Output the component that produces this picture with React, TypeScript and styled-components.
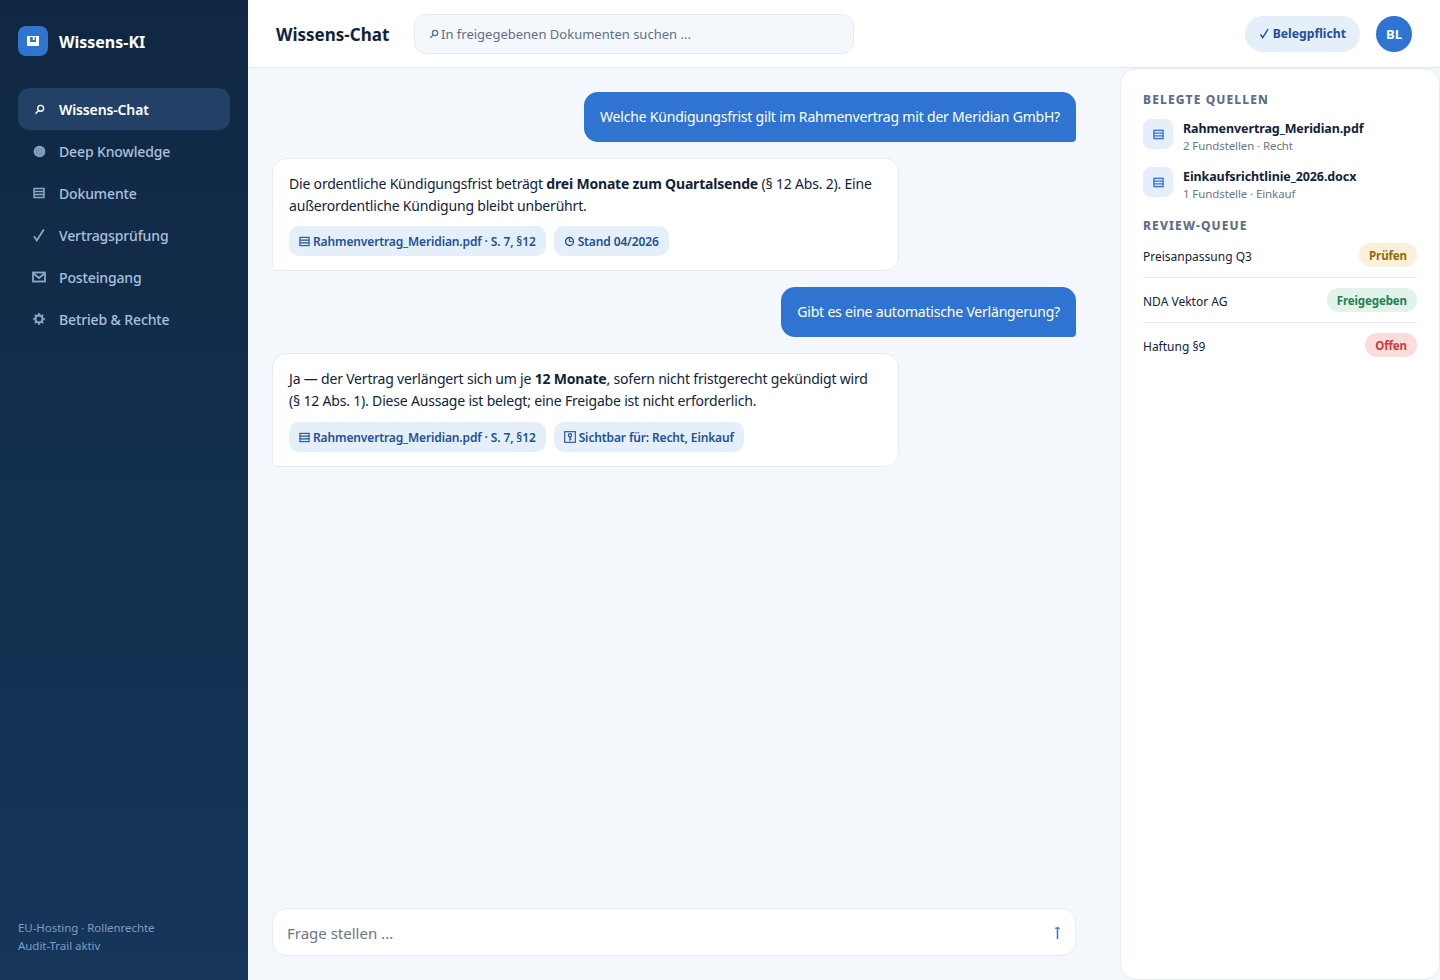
import React from "react";
import styled, { createGlobalStyle } from "styled-components";

const GlobalStyle = createGlobalStyle`
  * { box-sizing: border-box; }
  html, body { margin: 0; padding: 0; height: 100%; }
  body {
    font-family: "Noto Sans", "DejaVu Sans", sans-serif;
    background: #f4f8fd;
    color: #10233c;
  }
`;

const SearchIcon = ({ size = 12 }: { size?: number }) => (
  <svg width={size} height={size} viewBox="0 0 12 12" fill="none" stroke="currentColor">
    <circle cx="7.3" cy="4.7" r="3.2" strokeWidth="1.5" />
    <path d="M5 7.2 1.6 10.6" strokeWidth="1.6" />
  </svg>
);

const DotIcon = () => (
  <svg width="13" height="13" viewBox="0 0 13 13">
    <circle cx="6.5" cy="6.5" r="5.8" fill="#8ea6c7" />
    <circle cx="6.5" cy="6.5" r="4.6" fill="#7e95b8" />
  </svg>
);

const ListIcon = ({ size = 12, weight = 1.2 }: { size?: number; weight?: number }) => (
  <svg width={size} height={size} viewBox="0 0 12 12" fill="none" stroke="currentColor">
    <rect x="1" y="1.5" width="10" height="9" strokeWidth={weight} />
    <path d="M1 4.5h10M1 7.5h10" strokeWidth={weight} />
  </svg>
);

const CheckIcon = ({ size = 14 }: { size?: number }) => (
  <svg width={size} height={size} viewBox="0 0 14 14" fill="none" stroke="currentColor">
    <path d="M2 8.2 4.8 12.4 11.8 1.4" strokeWidth="1.8" />
  </svg>
);

const MailIcon = () => (
  <svg width="14" height="12" viewBox="0 0 14 12" fill="none" stroke="currentColor">
    <rect x="1" y="1.5" width="12" height="9" strokeWidth="1.8" />
    <path d="M1.5 2.5 7 7l5.5-4.5" strokeWidth="1.8" />
  </svg>
);

const GearIcon = () => (
  <svg width="14" height="14" viewBox="0 0 14 14" fill="none" stroke="currentColor">
    <circle cx="7" cy="7" r="3.6" strokeWidth="2.2" />
    <path
      d="M7 1v2M7 11v2M1 7h2M11 7h2M2.8 2.8l1.4 1.4M9.8 9.8l1.4 1.4M2.8 11.2l1.4-1.4M9.8 4.2l1.4-1.4"
      strokeWidth="1.6"
    />
  </svg>
);

const ClockIcon = () => (
  <svg width="11" height="11" viewBox="0 0 11 11" fill="none" stroke="currentColor">
    <circle cx="5.5" cy="5.5" r="4" strokeWidth="1.3" />
    <path d="M5.5 2.5v3h3" strokeWidth="1.2" />
  </svg>
);

const KeyBoxIcon = () => (
  <svg width="12" height="12" viewBox="0 0 12 12" fill="none" stroke="currentColor">
    <rect x="0.7" y="0.7" width="10.6" height="10.6" strokeWidth="1.1" />
    <circle cx="6" cy="4.2" r="1.6" strokeWidth="1.2" />
    <path d="M6 5.8v4M6 8h1.6" strokeWidth="1.2" />
  </svg>
);

const navItems = [
  { icon: <SearchIcon size={11} />, label: "Wissens-Chat", active: true },
  { icon: <DotIcon />, label: "Deep Knowledge" },
  { icon: <ListIcon weight={1.5} />, label: "Dokumente" },
  { icon: <CheckIcon />, label: "Vertragsprüfung" },
  { icon: <MailIcon />, label: "Posteingang" },
  { icon: <GearIcon />, label: "Betrieb & Rechte" },
];

const sources = [
  { name: "Rahmenvertrag_Meridian.pdf", meta: "2 Fundstellen · Recht" },
  { name: "Einkaufsrichtlinie_2026.docx", meta: "1 Fundstelle · Einkauf" },
];

const queue = [
  { name: "Preisanpassung Q3", status: "Prüfen", tone: "warn" },
  { name: "NDA Vektor AG", status: "Freigegeben", tone: "ok" },
  { name: "Haftung §9", status: "Offen", tone: "bad" },
] as const;

const App = () => {
  return (
    <>
      <GlobalStyle />
      <_Layout>
        <_Sidebar>
          <_Brand>
            <_Logo>
              <svg width="12" height="10" viewBox="0 0 12 10">
                <path
                  fill="#fff"
                  fillRule="evenodd"
                  d="M0 0h12v10H0zM3 1v5h6V1H7.6v3H5.8V1z"
                />
              </svg>
            </_Logo>
            <_BrandName>Wissens-KI</_BrandName>
          </_Brand>
          <_Nav>
            {navItems.map((item) => (
              <_NavItem key={item.label} $active={item.active}>
                <_NavIcon>{item.icon}</_NavIcon>
                {item.label}
              </_NavItem>
            ))}
          </_Nav>
          <_SideFooter>
            EU-Hosting · Rollenrechte
            <br />
            Audit-Trail aktiv
          </_SideFooter>
        </_Sidebar>

        <_Main>
          <_Topbar>
            <_Title>Wissens-Chat</_Title>
            <_Search>
              <SearchIcon size={10} />
              In freigegebenen Dokumenten suchen ...
            </_Search>
            <_TopRight>
              <_Duty>
                <CheckIcon size={11} />
                Belegpflicht
              </_Duty>
              <_Avatar>BL</_Avatar>
            </_TopRight>
          </_Topbar>

          <_Body>
            <_Chat>
              <_Messages>
                <_UserBubble>
                  Welche Kündigungsfrist gilt im Rahmenvertrag mit der Meridian GmbH?
                </_UserBubble>
                <_AnswerCard>
                  <_AnswerText>
                    Die ordentliche Kündigungsfrist beträgt{" "}
                    <strong>drei Monate zum Quartalsende</strong> (§{"\u00a0"}12 Abs. 2). Eine
                    außerordentliche Kündigung bleibt unberührt.
                  </_AnswerText>
                  <_Chips>
                    <_Chip>
                      <ListIcon size={11} />
                      Rahmenvertrag_Meridian.pdf · S. 7, §12
                    </_Chip>
                    <_Chip>
                      <ClockIcon />
                      Stand 04/2026
                    </_Chip>
                  </_Chips>
                </_AnswerCard>
                <_UserBubble>Gibt es eine automatische Verlängerung?</_UserBubble>
                <_AnswerCard>
                  <_AnswerText>
                    Ja — der Vertrag verlängert sich um je <strong>12 Monate</strong>,
                    sofern nicht fristgerecht gekündigt wird (§{"\u00a0"}12 Abs. 1). Diese Aussage
                    ist belegt; eine Freigabe ist nicht erforderlich.
                  </_AnswerText>
                  <_Chips $spaced>
                    <_Chip>
                      <ListIcon size={11} />
                      Rahmenvertrag_Meridian.pdf · S. 7, §12
                    </_Chip>
                    <_Chip>
                      <KeyBoxIcon />
                      Sichtbar für: Recht, Einkauf
                    </_Chip>
                  </_Chips>
                </_AnswerCard>
              </_Messages>
              <_Composer>
                <_ComposerInput placeholder="Frage stellen ..." />
                <_Send>
                  <svg width="7" height="13" viewBox="0 0 7 13" fill="none" stroke="currentColor">
                    <path d="M3.5 1v12" strokeWidth="1.5" />
                    <path d="M1 2.2h5" strokeWidth="1" />
                  </svg>
                </_Send>
              </_Composer>
            </_Chat>

            <_Panel>
              <_PanelTitle>Belegte Quellen</_PanelTitle>
              <_SourceList>
                {sources.map((s) => (
                  <_Source key={s.name}>
                    <_SourceIcon>
                      <ListIcon size={11} weight={1.5} />
                    </_SourceIcon>
                    <div>
                      <_SourceName>{s.name}</_SourceName>
                      <_SourceMeta>{s.meta}</_SourceMeta>
                    </div>
                  </_Source>
                ))}
              </_SourceList>
              <_PanelTitle>Review-Queue</_PanelTitle>
              <_Queue>
                {queue.map((q) => (
                  <_QueueRow key={q.name}>
                    <_QueueName>{q.name}</_QueueName>
                    <_Pill $tone={q.tone}>{q.status}</_Pill>
                  </_QueueRow>
                ))}
              </_Queue>
            </_Panel>
          </_Body>
        </_Main>
      </_Layout>
    </>
  );
};

export default App;

const _Layout = styled.div`
  display: flex;
  height: 980px;
  overflow: hidden;
`;

const _Sidebar = styled.aside`
  width: 248px;
  flex-shrink: 0;
  padding: 26px 18px 25px;
  display: flex;
  flex-direction: column;
  background: linear-gradient(180deg, #0f2742 0%, #16365a 100%);
`;

const _Brand = styled.div`
  display: flex;
  align-items: center;
  gap: 11px;
  height: 30px;
  margin-bottom: 32px;
`;

const _Logo = styled.div`
  width: 30px;
  height: 30px;
  border-radius: 8px;
  background: #2f74d0;
  display: flex;
  align-items: center;
  justify-content: center;
`;

const _BrandName = styled.div`
  padding-top: 2px;
  font-size: 16px;
  font-weight: 700;
  color: #ffffff;
`;

const _Nav = styled.nav`
  display: flex;
  flex-direction: column;
`;

const _NavItem = styled.div<{ $active?: boolean }>`
  height: 42px;
  padding: 0 14px;
  border-radius: 12px;
  display: flex;
  align-items: center;
  gap: 13px;
  font-size: 14px;
  letter-spacing: -0.13px;
  font-weight: ${({ $active }) => ($active ? 600 : 500)};
  color: ${({ $active }) => ($active ? "#ffffff" : "#a9c0de")};
  background: ${({ $active }) => ($active ? "#234166" : "transparent")};
`;

const _NavIcon = styled.span`
  width: 14px;
  display: flex;
  align-items: center;
  justify-content: center;
  color: #8ea6c7;
  ${_NavItem}:first-child & {
    color: #ffffff;
  }
`;

const _SideFooter = styled.div`
  margin-top: auto;
  font-size: 11.5px;
  line-height: 18px;
  letter-spacing: -0.05px;
  color: #7f9cc2;
`;

const _Main = styled.main`
  flex: 1;
  min-width: 0;
  display: flex;
  flex-direction: column;
`;

const _Topbar = styled.header`
  height: 68px;
  flex-shrink: 0;
  padding: 0 28px;
  display: flex;
  align-items: center;
  gap: 24px;
  background: #ffffff;
  border-bottom: 1px solid #e3ebf5;
`;

const _Title = styled.div`
  width: 114px;
  padding-top: 1px;
  font-size: 17px;
  font-weight: 700;
  white-space: nowrap;
  color: #10233c;
`;

const _Search = styled.div`
  width: 440px;
  height: 40px;
  padding: 0 14px;
  display: flex;
  align-items: center;
  gap: 2px;
  border-radius: 12px;
  border: 1px solid #e3ebf5;
  background: #f4f8fd;
  font-size: 13px;
  color: #5f6f85;
`;

const _TopRight = styled.div`
  margin-left: auto;
  display: flex;
  align-items: center;
  gap: 16px;
`;

const _Duty = styled.div`
  width: 115px;
  height: 36px;
  padding: 0 14px;
  border-radius: 18px;
  display: flex;
  align-items: center;
  gap: 3px;
  background: #e5eff9;
  font-size: 12.2px;
  font-weight: 700;
  white-space: nowrap;
  color: #1f4f96;
`;

const _Avatar = styled.div`
  width: 36px;
  height: 36px;
  border-radius: 50%;
  background: #2f74d0;
  color: #ffffff;
  display: flex;
  align-items: center;
  justify-content: center;
  font-size: 13px;
  font-weight: 700;
`;

const _Body = styled.div`
  flex: 1;
  min-height: 0;
  display: flex;
`;

const _Chat = styled.section`
  flex: 1;
  min-width: 0;
  padding: 24px 44px 24px 24px;
  display: flex;
  flex-direction: column;
`;

const _Messages = styled.div`
  flex: 1;
  display: flex;
  flex-direction: column;
  align-items: flex-start;
  gap: 16px;
`;

const _UserBubble = styled.div`
  align-self: flex-end;
  padding: 14px 16px;
  border-radius: 14px 14px 4px 14px;
  background: #2f74d0;
  color: #ffffff;
  font-size: 14px;
  line-height: 22px;
  letter-spacing: -0.2px;
`;

const _AnswerCard = styled.div`
  width: 627px;
  padding: 14px 16px;
  border-radius: 14px 14px 14px 4px;
  border: 1px solid #e3ebf5;
  background: #ffffff;
`;

const _AnswerText = styled.p`
  margin: 0;
  font-size: 14px;
  line-height: 22px;
  letter-spacing: -0.19px;
  color: #10233c;
`;

const _Chips = styled.div<{ $spaced?: boolean }>`
  display: flex;
  gap: 8px;
  margin-top: ${({ $spaced }) => ($spaced ? 10 : 9)}px;
`;

const _Chip = styled.span`
  height: 30px;
  padding: 0 10px;
  display: flex;
  align-items: center;
  gap: 3px;
  border-radius: 10px;
  background: #e5eff9;
  font-size: 12px;
  font-weight: 600;
  letter-spacing: -0.13px;
  color: #1f4f96;
`;

const _Composer = styled.div`
  height: 48px;
  padding: 0 14px;
  display: flex;
  align-items: center;
  border-radius: 14px;
  border: 1px solid #e3ebf5;
  background: #ffffff;
`;

const _ComposerInput = styled.input`
  flex: 1;
  border: none;
  outline: none;
  padding: 1px 0 0;
  background: transparent;
  font-family: inherit;
  font-size: 15px;
  &::placeholder {
    color: #6b7688;
    opacity: 1;
  }
`;

const _Send = styled.span`
  display: flex;
  color: #2f74d0;
`;

const _Panel = styled.aside`
  width: 320px;
  flex-shrink: 0;
  padding: 22px;
  border: 1px solid #e3ebf5;
  border-radius: 16px;
  background: #ffffff;
`;

const _PanelTitle = styled.h3`
  margin: 0;
  font-size: 12px;
  line-height: 18px;
  font-weight: 800;
  letter-spacing: 1.12px;
  text-transform: uppercase;
  color: #5f6f85;
`;

const _SourceList = styled.div`
  display: flex;
  flex-direction: column;
  gap: 12px;
  margin: 10px 0 14px;
`;

const _Source = styled.div`
  display: flex;
  align-items: flex-start;
  gap: 10px;
`;

const _SourceIcon = styled.div`
  width: 30px;
  height: 30px;
  border-radius: 8px;
  background: #e5eff9;
  color: #2f74d0;
  display: flex;
  align-items: center;
  justify-content: center;
`;

const _SourceName = styled.div`
  padding-top: 1px;
  font-size: 12.5px;
  line-height: 17px;
  letter-spacing: -0.1px;
  font-weight: 700;
  color: #10233c;
`;

const _SourceMeta = styled.div`
  font-size: 11.5px;
  line-height: 18px;
  letter-spacing: -0.1px;
  color: #6b7688;
`;

const _Queue = styled.div`
  padding-top: 8px;
`;

const _QueueRow = styled.div`
  display: flex;
  align-items: center;
  justify-content: space-between;
  padding: 10px 0;
  border-bottom: 1px solid #e3ebf5;
  &:first-child {
    padding-top: 0;
  }
  &:last-child {
    border-bottom: none;
  }
`;

const _QueueName = styled.span`
  padding-top: 3px;
  font-size: 12px;
  color: #10233c;
`;

const pillTones = {
  warn: { bg: "#fbf0d9", fg: "#94690f" },
  ok: { bg: "#e2f3e9", fg: "#1e7f55" },
  bad: { bg: "#fadcda", fg: "#c43d3d" },
};

const _Pill = styled.span<{ $tone: keyof typeof pillTones }>`
  height: 24px;
  padding: 0 10px;
  display: flex;
  align-items: center;
  border-radius: 12px;
  font-size: 11.5px;
  font-weight: 700;
  letter-spacing: -0.1px;
  background: ${({ $tone }) => pillTones[$tone].bg};
  color: ${({ $tone }) => pillTones[$tone].fg};
`;
